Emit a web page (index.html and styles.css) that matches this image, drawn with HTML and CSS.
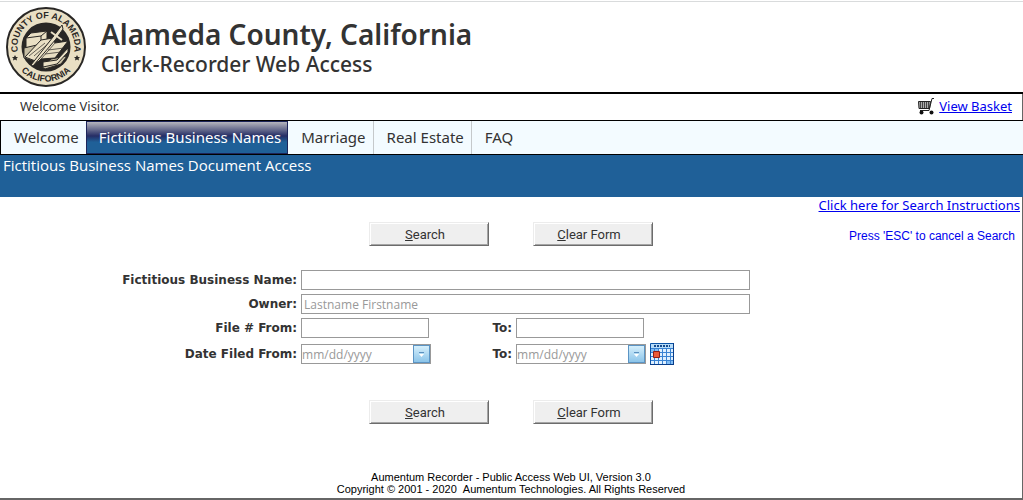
FILE: index.html
```html
<!DOCTYPE html>
<html lang="en">
<head>
    <meta charset="UTF-8">
    <meta name="viewport" content="width=device-width, initial-scale=1.0">
    <title>Fictitious Business Names Document Access</title>
    <link rel="stylesheet" href="styles.css">
</head>
<body>
    <header class="header">
        <svg class="seal" viewBox="0 0 80 80" role="img" aria-label="County of Alameda seal">
            <defs>
                <path id="topArc" d="M12 45a28.500 28.500 0 1 1 56 0"/>
                <path id="bottomArc" d="M5.500 40a34.500 34.500 0 0 0 69 0"/>
            </defs>
            <circle cx="40" cy="40" r="39" fill="#e9dfc4" stroke="#292725" stroke-width="2"/>
            <circle cx="40" cy="40" r="24.500" fill="#292725"/>
            <g fill="#e9dfc4" stroke="#292725" stroke-width="1">
                <path d="M20 31l5-5 16-2v8l-4 6-17 3z"/>
                <path d="M20 31l15-2 6-5M35 29v8" fill="none"/>
                <path d="M18 41l17-4 5 4-12 13-10-3z" fill="#c9c0a5"/>
                <path d="M36 60l9-8 16-3-6 8-16 5z" fill="#c9c0a5"/>
                <path d="M19 50l16-17 12-2 2 5 13-2-13 17-14 1-3 3z"/>
                <path d="M49 36L35 52M23 49l16-13M28 49l15-13M39 47l16-2M42 43l16-2" fill="none" stroke-width="0.700"/>
                <path d="M37 55l14-2 11-12v4L51 57l-14 3z"/>
                <path d="M56 18l1 4-7 10-23 27-2-1 22-28z"/>
                <path d="M45 25l11 8" fill="none" stroke="#e9dfc4" stroke-width="2"/>
            </g>
            <g class="seal-text">
                <text><textPath href="#topArc" startOffset="50%">COUNTY OF ALAMEDA</textPath></text>
                <text><textPath href="#bottomArc" startOffset="50%">CALIFORNIA</textPath></text>
            </g>
            <path d="M9 48l1 2h2l-1.500 1.500.5 2L9 52.500l-2 1 .5-2L6 50h2zM71 48l1 2h2l-1.500 1.500.5 2-2-1-2 1 .5-2L68 50h2z" fill="#292725"/>
        </svg>
        <div>
            <h1>Alameda County, California</h1>
            <h2>Clerk-Recorder Web Access</h2>
        </div>
    </header>

    <div class="welcome">
        <span>Welcome Visitor.</span>
        <a class="basket" href="#">
            <svg width="17" height="17" viewBox="0 0 17 17" aria-hidden="true">
                <path d="M0.500 3.500h12l-1 7H1z" fill="#aaa" stroke="#222"/>
                <path d="M2.500 4v6M4.500 4v6M6.500 4v6M8.500 4v6M10.500 4v6" stroke="#444"/>
                <path d="M16 0.500h-2l-3 12H2" fill="none" stroke="#222"/>
                <circle cx="3.500" cy="14.500" r="2" fill="#111"/>
                <circle cx="13.500" cy="14.500" r="2" fill="#111"/>
            </svg>
            <span>View Basket</span>
        </a>
    </div>

    <nav class="menu">
        <a href="#">Welcome</a>
        <a href="#" class="active">Fictitious Business Names</a>
        <a href="#">Marriage</a>
        <a href="#">Real Estate</a>
        <a href="#">FAQ</a>
    </nav>

    <div class="title">Fictitious Business Names Document Access</div>

    <main class="content">
        <a class="instructions" href="#">Click here for Search Instructions</a>
        <form id="searchForm">
            <div class="buttons">
                <button type="submit" class="btn"><u>S</u>earch</button>
                <button type="reset" class="btn"><u>C</u>lear Form</button>
                <span class="hint">Press 'ESC' to cancel a Search</span>
            </div>

            <div class="fields">
                <label for="business">Fictitious Business Name:</label>
                <input type="text" id="business" class="wide">

                <label for="owner">Owner:</label>
                <input type="text" id="owner" class="wide" placeholder="Lastname Firstname">

                <label for="fileFrom">File # From:</label>
                <input type="text" id="fileFrom" class="file">
                <label for="fileTo">To:</label>
                <input type="text" id="fileTo" class="file">

                <label for="dateFrom">Date Filed From:</label>
                <div class="date">
                    <input type="text" id="dateFrom" placeholder="mm/dd/yyyy">
                    <button type="button" class="drop" aria-label="Choose start date">
                        <svg width="7" height="5" viewBox="0 0 7 5"><path d="M1 0.500h5" stroke="#5b8fbe"/><path d="M1 2h5L3.500 5z" fill="#fff"/></svg>
                    </button>
                </div>
                <label for="dateTo">To:</label>
                <div class="date-to">
                    <div class="date">
                        <input type="text" id="dateTo" placeholder="mm/dd/yyyy">
                        <button type="button" class="drop" aria-label="Choose end date">
                            <svg width="7" height="5" viewBox="0 0 7 5"><path d="M1 0.500h5" stroke="#5b8fbe"/><path d="M1 2h5L3.500 5z" fill="#fff"/></svg>
                        </button>
                    </div>
                    <button type="button" class="calendar" aria-label="Calendar">
                        <svg width="24" height="22" viewBox="0 0 24 22">
                            <path d="M0.500 0.500h23v21H0.500z" fill="#dff0ff" stroke="#0b54a8"/>
                            <path d="M1 1h22v4H1z" fill="#b7dcf8"/>
                            <path d="M4 3h16" stroke="#164b8e" stroke-width="2" stroke-dasharray="2 1"/>
                            <path d="M1 6h7v3H1zM16 18h7v3h-7z" fill="#82bdf4"/>
                            <path d="M1 5.500h22M1 9.500h22M1 13.500h22M1 17.500h22M4.500 6v15M8.500 6v15M12.500 6v15M16.500 6v15M20.500 6v15" stroke="#3983d3"/>
                            <path d="M3.500 8.500h6v6h-6z" fill="#ea5938" stroke="#8e1d16"/>
                            <path d="M23.500 0v22M0 21.500h24" stroke="#083c88"/>
                        </svg>
                    </button>
                </div>
            </div>

            <div class="buttons">
                <button type="submit" class="btn"><u>S</u>earch</button>
                <button type="reset" class="btn"><u>C</u>lear Form</button>
            </div>
        </form>

        <footer>
            Aumentum Recorder - Public Access Web UI, Version 3.0<br>
            Copyright © 2001 - 2020 &nbsp;Aumentum Technologies. All Rights Reserved
        </footer>
    </main>
</body>
</html>
```
FILE: styles.css
```css
* {
    box-sizing: border-box;
}
body {
    margin: 0;
    padding-top: 1px;
    min-height: 100vh;
    display: flex;
    flex-direction: column;
    background-color: #fff;
    color: #333;
    font-family: "Noto Sans", sans-serif;
}
a {
    color: #0000ee;
}
.header {
    display: flex;
    align-items: center;
    gap: 15px;
    height: 93px;
    padding-left: 6px;
    border-top: 1px solid #d9dbdc;
    border-bottom: 2px solid #000;
}
.seal {
    width: 80px;
    height: 80px;
}
.seal-text {
    font-family: "Liberation Sans", sans-serif;
    font-size: 9px;
    font-weight: bold;
    text-anchor: middle;
    fill: #292725;
}
h1, h2 {
    margin: 0;
}
h1 {
    font-size: 28px;
    font-weight: 600;
    line-height: 34px;
}
h2 {
    font-size: 21px;
    font-weight: 500;
    line-height: 26px;
}
.welcome {
    display: flex;
    justify-content: space-between;
    align-items: center;
    height: 26px;
    padding: 0 10px 2px 20px;
    border-right: 1px solid #666;
    font-size: 13px;
    line-height: 20px;
}
.basket {
    display: flex;
    gap: 4px;
    align-items: center;
    text-decoration: none;
}
.basket span {
    text-decoration: underline;
}
.menu {
    display: flex;
    height: 35px;
    background-color: #f3fbff;
    border: 1px solid #000;
    border-right: none;
}
.menu a {
    padding: 0 7px 0 13px;
    border-right: 1px solid #c5c9cb;
    color: #333;
    font-size: 15px;
    line-height: 33px;
    text-decoration: none;
}
.menu a:first-child, .menu a:last-child {
    border-right: none;
}
.menu a.active {
    padding: 0 6px 0 12px;
    border: 1px solid #1c2459;
    background: linear-gradient(#b5b5bd, #252d65 45%, #1f6098 65%);
    color: #fff;
    line-height: 31px;
}
.title {
    height: 42px;
    padding-left: 3px;
    background-color: #1f6098;
    color: #fff;
    font-family: "Open Sans", sans-serif;
    font-size: 15px;
    font-weight: 500;
    line-height: 20px;
}
.content {
    flex: 1;
    display: flex;
    flex-direction: column;
    border-right: 1px solid #666;
    border-bottom: 2px solid #666;
}
.instructions {
    align-self: flex-end;
    margin-right: 2px;
    font-size: 13px;
    line-height: 17px;
}
form {
    padding-top: 8px;
}
.buttons {
    position: relative;
    display: flex;
    justify-content: center;
    gap: 44px;
}
.btn {
    width: 120px;
    height: 24px;
    padding: 0 8px 0 0;
    background-color: #efefef;
    border: 1px solid #ececec;
    border-right-color: #6c6c6c;
    border-bottom-color: #6c6c6c;
    box-shadow: inset 1px 1px #fff, inset -1px -1px #a5a5a5;
    color: #333;
    font-family: Roboto, sans-serif;
    font-size: 13px;
}
.hint {
    position: absolute;
    top: 6px;
    right: 7px;
    color: #0000ee;
    font-family: "Liberation Sans", sans-serif;
    font-size: 12px;
    line-height: 16px;
}
.fields {
    display: grid;
    grid-template-columns: 29% 130px 77px 234px;
    gap: 4px;
    align-items: center;
    margin: 24px 0 34px;
    padding-left: 1px;
}
label {
    text-align: right;
    font-family: "DejaVu Sans", sans-serif;
    font-size: 12px;
    font-weight: bold;
    line-height: 20px;
}
input {
    height: 20px;
    padding: 0 2px;
    border: 1px solid #999;
    background-color: #fff;
    font-family: "Open Sans", sans-serif;
    font-size: 12px;
}
input::placeholder {
    color: #999;
}
.wide {
    grid-column: span 3;
}
.file {
    width: 128px;
}
.date {
    display: flex;
    width: 130px;
    height: 20px;
    border: 1px solid #999;
}
.date input {
    flex: 1;
    min-width: 0;
    height: 18px;
    padding: 0;
    border: none;
}
.drop {
    display: flex;
    align-items: center;
    justify-content: center;
    width: 17px;
    padding: 0;
    border: 1px solid #5b94c4;
    background: linear-gradient(#d5effc, #8bc4e9);
}
.date-to {
    display: flex;
    align-items: center;
    gap: 4px;
    height: 24px;
}
.calendar {
    display: flex;
    padding: 0;
    border: none;
    background: none;
}
footer {
    margin-top: auto;
    padding-bottom: 3px;
    color: #000;
    font-family: "Liberation Sans", sans-serif;
    font-size: 11px;
    line-height: 12px;
    text-align: center;
}
```
